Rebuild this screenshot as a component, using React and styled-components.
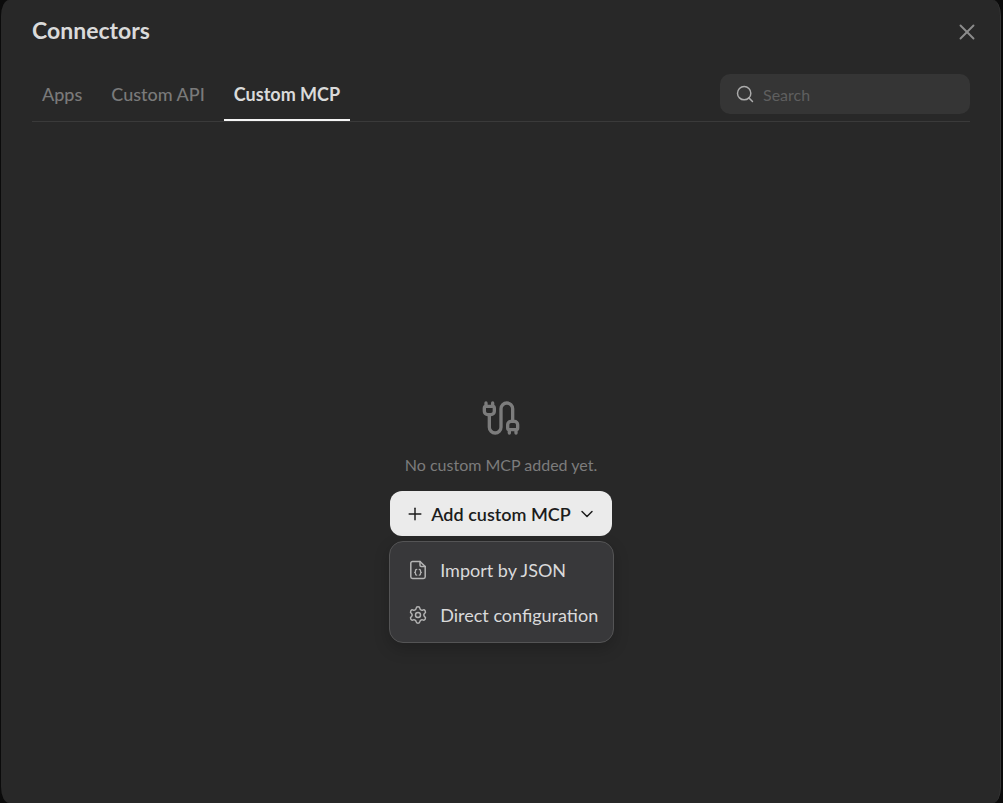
import React, { useState } from "react";
import styled, { createGlobalStyle } from "styled-components";
import { Cable, ChevronDown, Plus, Search, Settings, X } from "lucide-react";

const GlobalStyle = createGlobalStyle`
  *, *::before, *::after { box-sizing: border-box; }
  body {
    margin: 0;
    background: #0b0b0b;
    font-family: Lato, "Liberation Sans", sans-serif;
  }
  button, input { font-family: inherit; }
`;

const Dialog = styled.main`
  display: flex;
  flex-direction: column;
  min-height: 100vh;
  margin: 0 2px 0 1px;
  padding: 16px 30px 0;
  background: #282828;
  border: solid #363636;
  border-width: 0 1px 0 0;
  border-radius: 8px / 16px;
`;

const Header = styled.header`
  display: flex;
  justify-content: space-between;
  align-items: flex-start;
  height: 32px;
  padding-left: 1px;
`;

const Title = styled.h1`
  margin: 0;
  font-size: 23px;
  line-height: 28px;
  font-weight: 700;
  color: #dadada;
`;

const CloseButton = styled.button`
  display: flex;
  margin: 3px -10px 0 0;
  padding: 0;
  border: 0;
  background: none;
  color: #8c8c8c;
`;

const Toolbar = styled.div`
  display: flex;
  justify-content: space-between;
  align-items: flex-start;
  height: 48px;
  margin: 26px 0 0 1px;
  border-bottom: 1px solid #3a3a3a;
`;

const Tabs = styled.nav`
  display: flex;
  gap: 9px;
`;

const Tab = styled.button`
  height: 47px;
  padding: 0 10px 5px;
  border: 0;
  border-bottom: 2px solid ${(p) => (p.$active ? "#f5f5f5" : "transparent")};
  background: none;
  font-size: 18px;
  line-height: 24px;
  font-weight: ${(p) => (p.$active ? 700 : 500)};
  color: ${(p) => (p.$active ? "#dadada" : "#7a7a7a")};
`;

const SearchField = styled.label`
  display: flex;
  align-items: center;
  gap: 8px;
  width: 250px;
  height: 40px;
  padding: 0 15px;
  border-radius: 10px;
  background: #353535;
  color: #acacac;
`;

const SearchInput = styled.input`
  flex: 1;
  min-width: 0;
  padding: 2px 0 0;
  border: 0;
  outline: 0;
  background: none;
  font-size: 16px;
  line-height: 20px;
  color: #dadada;
  &::placeholder { color: #5f5f5f; opacity: 1; }
`;

const EmptyState = styled.section`
  display: flex;
  flex: 1;
  flex-direction: column;
  align-items: center;
  padding: 276px 0 0 1px;
  color: #7c7c7c;
`;

const EmptyText = styled.p`
  margin: 16px 0 15px;
  font-size: 16px;
  line-height: 22px;
  font-weight: 400;
`;

const MenuAnchor = styled.div`
  position: relative;
`;

const AddButton = styled.button`
  display: flex;
  align-items: center;
  gap: 6px;
  height: 45px;
  padding: 0 15px;
  border: 0;
  border-radius: 12px;
  background: #ebebeb;
  font-size: 18px;
  line-height: 24px;
  font-weight: 600;
  color: #1c1c1c;
`;

const Menu = styled.div`
  position: absolute;
  top: 100%;
  left: -1px;
  width: 225px;
  margin-top: 5px;
  padding: 5px;
  border: 1px solid #545455;
  border-radius: 14px;
  background: #38383a;
  box-shadow: 0 6px 16px rgba(0, 0, 0, 0.2);
`;

const MenuItem = styled.button`
  display: flex;
  align-items: center;
  gap: 12px;
  width: 100%;
  height: 45px;
  padding: 0 13px;
  border: 0;
  background: none;
  font-size: 18px;
  line-height: 24px;
  font-weight: 400;
  white-space: nowrap;
  color: #dadada;
  svg { flex: none; color: #b4b4b4; }
`;

function JsonFileIcon() {
  return (
    <svg width="20" height="20" viewBox="0 0 20 20" fill="none" stroke="currentColor" strokeWidth="1.5" strokeLinecap="round" strokeLinejoin="round" aria-hidden="true">
      <path d="M12 1.5H4.5A1.7 1.7 0 0 0 2.8 3.2v13.6a1.7 1.7 0 0 0 1.7 1.7h11a1.7 1.7 0 0 0 1.7-1.7V6.5z" />
      <path d="M12 1.5v3.8a1.2 1.2 0 0 0 1.2 1.2h4" />
      <path strokeWidth="1.3" d="M8.7 9.4c-.9 0-1.2.4-1.2 1.1v.8c0 .6-.3 1-.9 1 .6 0 .9.4.9 1v.8c0 .7.3 1.1 1.2 1.1M11.3 9.4c.9 0 1.2.4 1.2 1.1v.8c0 .6.3 1 .9 1-.6 0-.9.4-.9 1v.8c0 .7-.3 1.1-1.2 1.1" />
    </svg>
  );
}

const TABS = ["Apps", "Custom API", "Custom MCP"];

export default function App() {
  const [tab, setTab] = useState("Custom MCP");
  const [open, setOpen] = useState(true);
  return (
    <>
      <GlobalStyle />
      <Dialog>
        <Header>
          <Title>Connectors</Title>
          <CloseButton type="button" aria-label="Close">
            <X size={26} strokeWidth={1.75} />
          </CloseButton>
        </Header>
        <Toolbar>
          <Tabs>
            {TABS.map((name) => (
              <Tab key={name} type="button" $active={name === tab} onClick={() => setTab(name)}>
                {name}
              </Tab>
            ))}
          </Tabs>
          <SearchField>
            <Search size={20} strokeWidth={1.75} />
            <SearchInput type="text" placeholder="Search" aria-label="Search" />
          </SearchField>
        </Toolbar>
        <EmptyState>
          <Cable size={40} />
          <EmptyText>No custom MCP added yet.</EmptyText>
          <MenuAnchor>
            <AddButton type="button" aria-expanded={open} onClick={() => setOpen(!open)}>
              <Plus size={20} strokeWidth={1.75} />
              Add custom MCP
              <ChevronDown size={20} strokeWidth={1.75} />
            </AddButton>
            {open && (
              <Menu>
                <MenuItem type="button">
                  <JsonFileIcon />
                  Import by JSON
                </MenuItem>
                <MenuItem type="button">
                  <Settings size={20} strokeWidth={1.75} />
                  Direct configuration
                </MenuItem>
              </Menu>
            )}
          </MenuAnchor>
        </EmptyState>
      </Dialog>
    </>
  );
}
